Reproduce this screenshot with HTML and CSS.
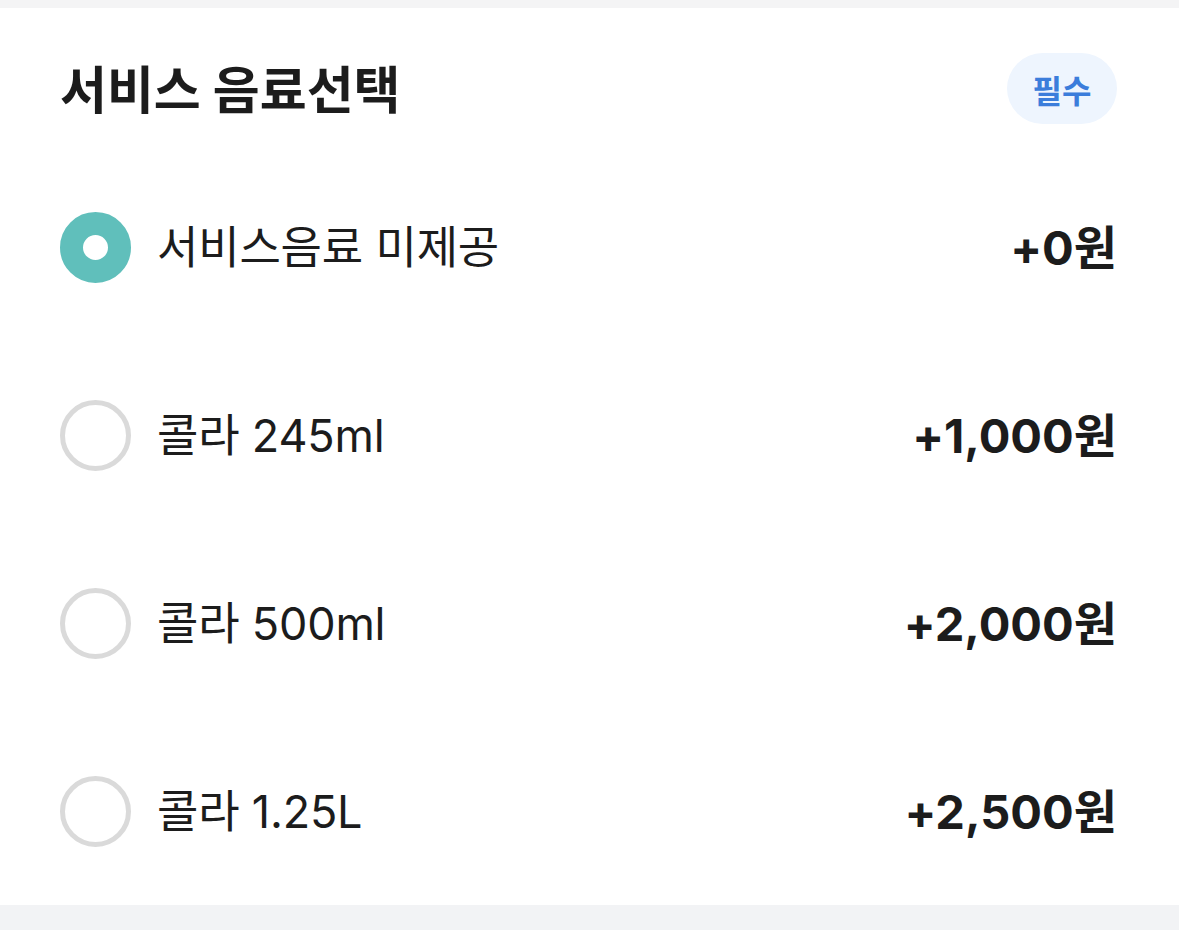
FILE: index.html
```html
<!DOCTYPE html>
<html lang="ko">
<head>
    <meta charset="UTF-8">
    <meta name="viewport" content="width=device-width, initial-scale=1.0">
    <title>서비스 음료선택</title>
    <link rel="stylesheet" href="styles.css">
</head>
<body>
    <div class="divider"></div>

    <!-- Drink option group -->
    <section class="option-group">
        <div class="group-header">
            <h2 class="group-title">서비스 음료선택</h2>
            <span class="badge">필수</span>
        </div>

        <ul class="option-list">
            <li class="option selected">
                <span class="radio"></span>
                <span class="option-name">서비스음료 미제공</span>
                <span class="option-price">+0원</span>
            </li>
            <li class="option">
                <span class="radio"></span>
                <span class="option-name">콜라 245ml</span>
                <span class="option-price">+1,000원</span>
            </li>
            <li class="option">
                <span class="radio"></span>
                <span class="option-name">콜라 500ml</span>
                <span class="option-price">+2,000원</span>
            </li>
            <li class="option">
                <span class="radio"></span>
                <span class="option-name">콜라 1.25L</span>
                <span class="option-price">+2,500원</span>
            </li>
        </ul>
    </section>

    <div class="divider bottom"></div>
</body>
</html>
```

FILE: styles.css
```css
body {
    margin: 0;
    background: #fff;
    color: #1c1c1c;
    font-family: Inter, "Noto Sans CJK KR", sans-serif;
}

.divider {
    height: 8px;
    background: #f4f4f5;
}

.divider.bottom {
    height: 25px;
    background: #f2f3f5;
}

/* Option group */
.option-group {
    padding: 45px 62px 0 60px;
}

.group-header {
    display: flex;
    justify-content: space-between;
    align-items: center;
    height: 71px;
    margin-bottom: 29px;
}

.group-title {
    margin: 0;
    font-size: 51px;
    font-weight: 700;
    padding-bottom: 4px;
}

.badge {
    display: flex;
    align-items: center;
    justify-content: center;
    width: 110px;
    height: 71px;
    border-radius: 36px;
    background: #eef5fe;
    color: #3b7ddb;
    font-size: 32px;
    font-weight: 700;
}

.option-list {
    list-style: none;
    margin: 0;
    padding: 0;
}

.option {
    display: flex;
    align-items: center;
    height: 188px;
}

.radio {
    box-sizing: border-box;
    width: 71px;
    height: 71px;
    border-radius: 50%;
    border: 5px solid #dadada;
    flex-shrink: 0;
}

.option.selected .radio {
    border: 23px solid #60bfbb;
    background: #fff;
}

.option-name {
    flex: 1;
    margin-left: 26px;
    padding-bottom: 6px;
    font-size: 45px;
    letter-spacing: -0.2px;
}

.option-price {
    padding-bottom: 6px;
    font-size: 47px;
    font-weight: 700;
}
```
